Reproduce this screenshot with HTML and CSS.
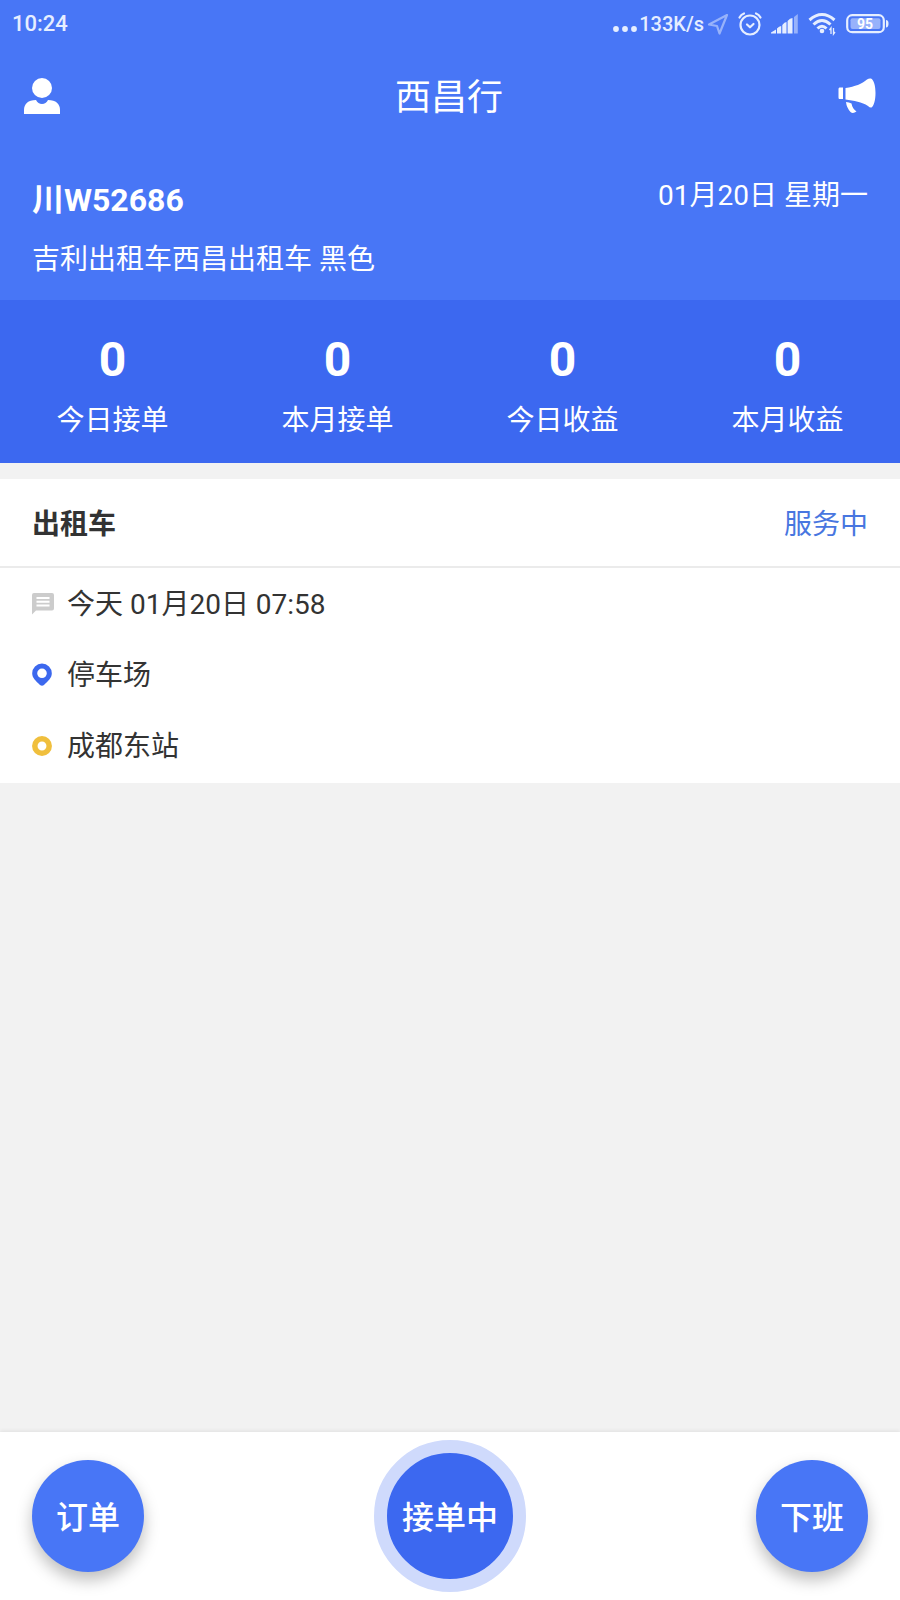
FILE: index.html
```html
<!DOCTYPE html>
<html lang="zh-CN">
<head>
<meta charset="utf-8">
<meta name="viewport" content="width=device-width, initial-scale=1">
<title>西昌行</title>
<link rel="stylesheet" href="styles.css">
</head>
<body>
<div class="app">
  <header class="top">
    <div class="status">
      <time class="clock">10:24</time>
      <div class="indicators">
        <svg class="dots" width="24" height="20" viewBox="0 0 24 20" fill="currentColor" aria-hidden="true"><circle cx="3" cy="15" r="2.900"/><circle cx="12" cy="15" r="2.900"/><circle cx="21" cy="15" r="2.900"/></svg>
        <span class="speed">133K/s</span>
        <svg class="dim location" width="22" height="22" viewBox="0 0 22 22" fill="none" stroke="currentColor" stroke-width="2.200" stroke-linejoin="round" aria-hidden="true"><path d="M20 2 2 11.500 10 13 12.500 20.500Z"/></svg>
        <svg class="alarm" width="24" height="24" viewBox="0 0 24 24" fill="none" stroke="currentColor" stroke-width="2.200" stroke-linecap="round" stroke-linejoin="round" aria-hidden="true"><circle cx="12" cy="13" r="9.500"/><path d="M1.500 5.500Q3 2.500 6 1.500M22.500 5.500Q21 2.500 18 1.500M9 12.500 12 15.300 15.500 12"/></svg>
        <svg class="signal" width="27" height="20" viewBox="0 0 27 20" fill="currentColor" aria-hidden="true"><path d="M0 19.500V18.500L5 15.500V19.500ZM6 14.500Q8 12 10.200 12V19.500H6ZM11.300 11Q13.500 8 15.500 8V19.500H11.300ZM16.600 7Q19 4 21.500 4V19.500H16.600Z"/><path class="dim" d="M23 3 26.800 0V19.500H23Z"/></svg>
        <svg class="wifi" width="28" height="24" viewBox="0 0 28 24" fill="none" stroke="currentColor" stroke-width="3" aria-hidden="true"><path d="M1.500 8Q14-3 26.500 8M5.500 12.500Q14 4.500 22.500 12.500M9.500 16.500Q14 12 18.500 16.500"/><circle cx="14" cy="19" r="2.300" fill="currentColor" stroke="none"/><path stroke-width="1.300" d="M23 22V16L21.500 18M25.500 16V22L27 20"/></svg>
        <svg class="battery" width="43" height="20" viewBox="0 0 43 20" aria-label="95"><rect x="1.200" y="1.200" width="36.600" height="17" rx="5" fill="none" stroke="currentColor" stroke-width="2.200"/><rect x="4.500" y="4.300" width="30" height="10.800" rx="2" fill="currentColor" opacity=".5"/><path d="M40 6Q42.500 6 42.500 9.700T40 13.500Z" fill="currentColor"/><text class="charge" x="19" y="14.500" text-anchor="middle">95</text></svg>
      </div>
    </div>
    <nav class="nav">
      <button class="icon-btn" type="button" aria-label="个人中心"><svg width="36" height="36" viewBox="0 0 36 36" fill="currentColor"><circle cx="18" cy="10" r="10"/><path d="M0 36V32C0 26 4 22 12 22Q14 26 18 26T24 22C32 22 36 26 36 32V36Z"/></svg></button>
      <h1 class="title">西昌行</h1>
      <button class="icon-btn" type="button" aria-label="公告"><svg width="38" height="36" viewBox="0 0 38 36" fill="currentColor"><path d="M1.500 9.500H5V21H1.500Q.500 21 .500 19.500V11Q.500 9.500 1.500 9.500ZM7.500 10C17 8.500 24 6 29 1.500Q31 0 33 .500C36 2 37.500 8 37.500 15S36 28 33.500 29.500Q32 30 30 28C24 24 16 22.500 7.500 21.500ZM8 24Q11 24 13.500 25.500C14 29 16 32 18.500 33.500Q15 36 12.500 34Q8.500 29.500 8 24Z"/></svg></button>
    </nav>
    <section class="vehicle">
      <div class="vehicle-main">
        <strong class="plate">川W52686</strong>
        <p class="model">吉利出租车西昌出租车 黑色</p>
      </div>
      <time class="date">01月20日 星期一</time>
    </section>
  </header>
  <dl class="stats">
    <div class="stat"><dt>今日接单</dt><dd>0</dd></div>
    <div class="stat"><dt>本月接单</dt><dd>0</dd></div>
    <div class="stat"><dt>今日收益</dt><dd>0</dd></div>
    <div class="stat"><dt>本月收益</dt><dd>0</dd></div>
  </dl>
  <main class="content">
    <article class="order">
      <div class="order-head"><h2>出租车</h2><span class="state">服务中</span></div>
      <ul class="details">
        <li><svg width="22" height="22" viewBox="0 0 22 22" aria-hidden="true"><path fill="#ccc" d="M2 0H20Q22 0 22 2V15.500Q22 17.500 20 17.500H4L0 21.500V2Q0 0 2 0Z"/><path stroke="#fff" stroke-width="2" d="M4.500 5H17.500M4.500 8.800H17.500M4.500 12.600H17.500"/></svg><span>今天 01月20日 07:58</span></li>
        <li><svg width="22" height="24" viewBox="0 0 22 24" aria-hidden="true"><path fill="#3c68ee" fill-rule="evenodd" d="M10 .500A9.800 9.800 0 0 1 19.800 10.500C19.800 15 16 18 12 22Q10 23.500 8 22C4 18 .200 15 .200 10.500A9.800 9.800 0 0 1 10 .500ZM10 5.500A4.800 4.800 0 1 0 10 15.100A4.800 4.800 0 1 0 10 5.500Z"/></svg><span>停车场</span></li>
        <li><svg width="22" height="22" viewBox="0 0 22 22" aria-hidden="true"><circle cx="10" cy="11" r="7.200" fill="none" stroke="#f0bf3d" stroke-width="5.500"/></svg><span>成都东站</span></li>
      </ul>
    </article>
  </main>
  <footer class="actions">
    <button class="round" type="button">订单</button>
    <button class="round primary" type="button">接单中</button>
    <button class="round" type="button">下班</button>
  </footer>
</div>
</body>
</html>
```
FILE: styles.css
```css
* { box-sizing: border-box; }
body, h1, h2, p, ul, dl, dd { margin: 0; padding: 0; }
body {
  background: #f2f2f2;
  color: #333;
  font-family: Roboto, "Noto Sans CJK SC", sans-serif;
  font-size: 28px;
  line-height: 40px;
}
button { border: 0; padding: 0; font: inherit; color: inherit; background: none; cursor: pointer; }
svg { display: block; flex: none; }
.app { min-height: 100vh; display: flex; flex-direction: column; }
.top { background: #4876f6; color: #fff; }
.status {
  display: flex;
  justify-content: space-between;
  align-items: center;
  height: 48px;
  padding: 0 11px 0 12px;
  color: #e6eeff;
  font-weight: 500;
  font-size: 22px;
}
.indicators { display: flex; align-items: center; }
.speed { font-size: 20px; margin-left: 2px; }
.location { margin-left: 3px; }
.alarm { margin-left: 9px; }
.signal { margin-left: 9px; }
.wifi { margin-left: 10px; }
.battery { margin-left: 10px; }
.dim { opacity: .5; }
.charge { font-size: 14px; font-weight: 700; fill: #fff; }
.nav {
  display: flex;
  justify-content: space-between;
  align-items: center;
  height: 96px;
  padding: 0 24px;
}
.title { padding-top: 4px; font-size: 36px; font-weight: 400; }
.vehicle {
  display: flex;
  justify-content: space-between;
  align-items: flex-start;
  padding: 32px 32px 20px;
}
.vehicle-main { display: grid; gap: 20px; padding-top: 4px; }
.plate { font-size: 32px; }
.stats {
  display: grid;
  grid-template-columns: repeat(4, 1fr);
  padding: 32px 0 22px;
  background: #3c68f0;
  color: #fff;
  text-align: center;
}
.stat { display: flex; flex-direction: column-reverse; gap: 13px; }
.stat dd { font-size: 48px; line-height: 56px; font-weight: 700; }
.content { flex: 1; padding-top: 16px; }
.order { background: #fff; }
.order-head {
  display: flex;
  justify-content: space-between;
  align-items: center;
  height: 89px;
  padding: 4px 32px 0;
  border-bottom: 2px solid #ebebeb;
}
.order-head h2 { font-size: 28px; font-weight: 700; }
.state { color: #4876e0; }
.details { padding-bottom: 2px; list-style: none; }
.details li { display: flex; align-items: center; gap: 13px; height: 71px; padding: 0 32px; }
.details span { padding-top: 3px; }
.actions {
  display: flex;
  justify-content: space-between;
  align-items: center;
  height: 168px;
  padding: 0 32px;
  background: #fff;
  box-shadow: 0 -1px 4px rgba(0, 0, 0, .08);
}
.round {
  width: 112px;
  height: 112px;
  padding-top: 4px;
  border-radius: 50%;
  background: #4876f6;
  color: #fff;
  font-size: 32px;
  font-weight: 500;
  box-shadow: 0 8px 16px rgba(0, 0, 0, .26);
}
.primary {
  width: 152px;
  height: 152px;
  border: 13px solid #cfdafc;
  background: #3c68f0;
  box-shadow: none;
}
```
